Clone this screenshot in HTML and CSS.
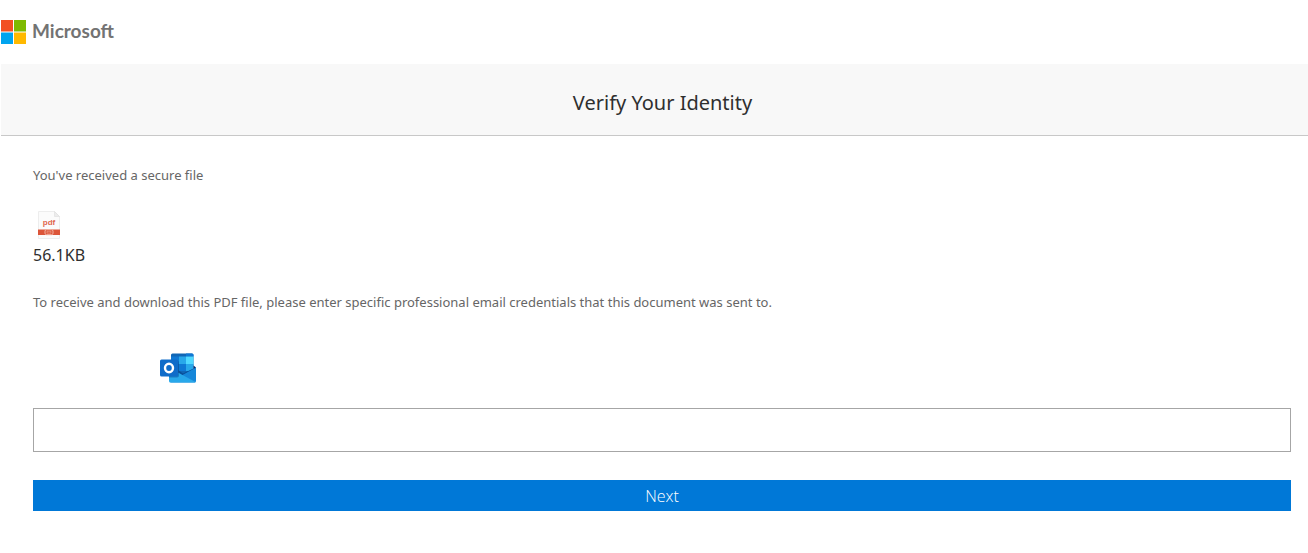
FILE: index.html
```html
<!DOCTYPE html>
<html lang="en">
<head>
<meta charset="utf-8">
<meta name="viewport" content="width=device-width, initial-scale=1">
<title>Verify Your Identity</title>
<link rel="stylesheet" href="styles.css">
</head>
<body>
<header class="brand">
  <svg class="brand-mark" viewBox="0 0 25 24" aria-hidden="true">
    <path fill="#f25022" d="M0 0h12v11.500H0z"/>
    <path fill="#7fba00" d="M13 0h12v11.500H13z"/>
    <path fill="#00a4ef" d="M0 12.500h12V24H0z"/>
    <path fill="#ffb900" d="M13 12.500h12V24H13z"/>
  </svg>
  <span class="brand-name">Microsoft</span>
</header>
<div class="title-bar">
  <h1 class="title">Verify Your Identity</h1>
</div>
<main class="content">
  <p class="note">You've received a secure file</p>
  <div class="file">
    <svg class="file-icon" viewBox="0 0 32 32" role="img" aria-label="PDF file">
      <path d="M5.500 2.500h16l5 5v22h-21z" fill="#fbfbfb" stroke="#ededed"/>
      <path d="M21.500 2.500v5h5z" fill="#ececec" stroke="#dedede" stroke-width=".6"/>
      <text class="file-type" x="16" y="16" text-anchor="middle">pdf</text>
      <path d="M5 20.500h22V26H5z" fill="#dc5539"/>
      <rect x="12" y="20.700" width="8" height="5" rx="1.500" fill="#dc5539" stroke="#f3b5a6"/>
      <path d="M14 22.300h4v1.800h-4z" fill="#dc5539" stroke="#f3b5a6" stroke-width=".5"/>
    </svg>
    <span class="file-size">56.1KB</span>
  </div>
  <label class="note" for="email">To receive and download this PDF file, please enter specific professional email credentials that this document was sent to.</label>
  <svg class="provider" viewBox="0 0 36 30" role="img" aria-label="Outlook">
    <path d="M12.500 .5H32a1.500 1.500 0 0 1 1.500 1.500v21H11V2A1.500 1.500 0 0 1 12.500 .5z" fill="#1066b5"/>
    <path d="M26 .5h6q1.500 0 1.500 1.500v1.500H26z" fill="#0f78d4"/>
    <path d="M11 3.500h8V11h-8z" fill="#0f78d4"/>
    <path d="M19 3.500h7V11h-7z" fill="#28a8ea"/>
    <path d="M26 3.500h7.500V11H26z" fill="#50d9ff"/>
    <path d="M19 11h7v7h-7z" fill="#0f78d4"/>
    <path d="M26 11h7.500v7H26z" fill="#28a8ea"/>
    <path d="M33.500 12.500L36 14.500l-2.500 3z" fill="#0a2767"/>
    <path d="M18 17l5 3.500 10.500-5v8H18z" fill="#0a4f98"/>
    <path d="M36 14.500V28q0 1.500-1.500 1.500H10L22.500 22z" fill="#1687d9"/>
    <path d="M9 14.500l13.500 7.500L35.500 29q-.4.500-1.500.5H10.500Q9 29.500 9 28z" fill="#28a8ea"/>
    <path d="M17 7.500q2 0 2 2v13q0 2-2 2H9v-17z" fill="#075197" opacity=".5"/>
    <rect y="6.500" width="18" height="17" rx="1.500" fill="#0f6cc9"/>
    <ellipse cx="9" cy="15" rx="4" ry="4.200" fill="none" stroke="#fff" stroke-width="2.400"/>
  </svg>
  <input class="field" id="email" type="email">
  <button class="next" type="button">Next</button>
</main>
</body>
</html>
```
FILE: styles.css
```css
* {
  box-sizing: border-box;
}

body {
  margin: 0 0 0 1px;
  background: #fff;
  color: #2f2f2f;
  font-family: "Segoe UI", "Noto Sans", "Open Sans", sans-serif;
}

.brand {
  display: flex;
  align-items: center;
  gap: 6px;
  height: 64px;
}

.brand-mark {
  width: 25px;
  height: 24px;
}

.brand-name {
  color: #737373;
  font-family: Lato, "Open Sans", sans-serif;
  font-size: 19px;
  font-weight: 700;
  line-height: 24px;
  padding-bottom: 2px;
}

.title-bar {
  padding: 26px 16px 20px 32px;
  border-bottom: 1px solid #c8c8c8;
  background: #f8f8f8;
}

.title {
  margin: 0;
  font-size: 20px;
  font-weight: 400;
  line-height: 25px;
  text-align: center;
}

.content {
  display: flex;
  flex-direction: column;
  padding: 29px 17px 32px 32px;
}

.note {
  margin: 0;
  color: #666;
  font-size: 13px;
  line-height: 20px;
}

.file {
  display: flex;
  flex-direction: column;
  margin: 24px 0 22px;
}

.file-icon {
  width: 32px;
  height: 32px;
}

.file-type {
  fill: #e0654b;
  font-family: "Liberation Sans", sans-serif;
  font-size: 8px;
  font-weight: 700;
}

.file-size {
  font-size: 16px;
  line-height: 29px;
}

.provider {
  width: 36px;
  height: 30px;
  margin: 41px 0 25px 127px;
}

.field {
  width: 100%;
  height: 44px;
  padding: 8px 12px;
  border: 1px solid #a6a6a6;
  border-radius: 0;
  background: #fff;
  font: inherit;
}

.next {
  height: 31px;
  margin-top: 28px;
  padding: 0;
  border: 0;
  background: #0078d7;
  color: #fff;
  font-family: "Open Sans", "Noto Sans", sans-serif;
  font-size: 16px;
  font-weight: 300;
}
```
